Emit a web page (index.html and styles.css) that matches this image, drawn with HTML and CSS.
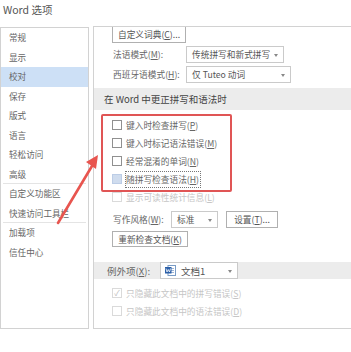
FILE: index.html
```html
<!DOCTYPE html>
<html lang="zh-CN">
<head>
<meta charset="utf-8">
<link rel="stylesheet" href="styles.css">
</head>
<body>
<div class="title">Word 选项</div>
<div class="main">
  <div class="nav">
    <div class="nav-item">常规</div>
    <div class="nav-item">显示</div>
    <div class="nav-item sel">校对</div>
    <div class="nav-item">保存</div>
    <div class="nav-item">版式</div>
    <div class="nav-item">语言</div>
    <div class="nav-item">轻松访问</div>
    <div class="nav-item">高级</div>
    <div class="nav-sep"></div>
    <div class="nav-item">自定义功能区</div>
    <div class="nav-item">快速访问工具栏</div>
    <div class="nav-sep"></div>
    <div class="nav-item">加载项</div>
    <div class="nav-item">信任中心</div>
  </div>
  <div class="content">
    <div class="btn cut">自定义词典(<u>C</u>)...</div>
    <div class="row r1">
      <span class="lbl">法语模式(<u>M</u>):</span>
      <span class="select w98">传统拼写和新式拼写<i class="arr"></i></span>
    </div>
    <div class="row r2">
      <span class="lbl">西班牙语模式(<u>H</u>):</span>
      <span class="select w105">仅 Tuteo 动词<i class="arr"></i></span>
    </div>
    <div class="band">在 Word 中更正拼写和语法时</div>
    <div class="checks">
      <div class="chk"><span class="box"></span><span>键入时检查拼写(<u>P</u>)</span></div>
      <div class="chk"><span class="box"></span><span>键入时标记语法错误(<u>M</u>)</span></div>
      <div class="chk"><span class="box"></span><span>经常混淆的单词(<u>N</u>)</span></div>
      <div class="chk"><span class="box blue"></span><span class="focus">随拼写检查语法(<u>H</u>)</span></div>
      <div class="chk dis"><span class="box"></span><span>显示可读性统计信息(<u>L</u>)</span></div>
    </div>
    <div class="row r3">
      <span class="lbl short">写作风格(<u>W</u>):</span>
      <span class="select w47">标准<i class="arr"></i></span>
      <span class="btn set">设置(<u>T</u>)...</span>
    </div>
    <div class="btn recheck">重新检查文档(<u>K</u>)</div>
    <div class="band ex">
      <span class="lbl ex-lbl">例外项(<u>X</u>):</span>
      <span class="select w78 doc"><svg class="docico" viewBox="0 0 11 11" width="11" height="11"><rect x="3" y="0.5" width="7.5" height="10" fill="#fff" stroke="#7a9cc6" stroke-width="1"/><rect x="5" y="3" width="4" height="1" fill="#9fb6d6"/><rect x="5" y="5" width="4" height="1" fill="#9fb6d6"/><rect x="5" y="7" width="4" height="1" fill="#9fb6d6"/><rect x="0" y="2" width="6.5" height="6.5" fill="#2b5fa8"/><path d="M1 3.5 L2 7 L3.25 4.5 L4.5 7 L5.5 3.5" fill="none" stroke="#fff" stroke-width="0.8"/></svg>文档1<i class="arr"></i></span>
    </div>
    <div class="checks ex-checks">
      <div class="chk dis"><span class="box tick">✓</span><span>只隐藏此文档中的拼写错误(<u>S</u>)</span></div>
      <div class="chk dis"><span class="box"></span><span>只隐藏此文档中的语法错误(<u>D</u>)</span></div>
    </div>
  </div>
</div>
<div class="redbox"></div>
<svg class="arrow" width="351" height="352" viewBox="0 0 351 352">
  <line x1="58" y1="223" x2="92" y2="166" stroke="#e8554f" stroke-width="2.6" stroke-linecap="round"/>
  <polygon points="98,155 86,162 96,169" fill="#e8554f"/>
</svg>
</body>
</html>
```
FILE: styles.css
```css
* { box-sizing: border-box; }
html, body { margin: 0; padding: 0; background: #fff; }
body {
  width: 351px; height: 352px; overflow: hidden; position: relative;
  font-family: "Noto Sans CJK SC", "Noto Sans", sans-serif;
  font-size: 8.7px; color: #555;
}
u { text-decoration: underline; text-underline-offset: 1px; }
.title { height: 26px; line-height: 20px; padding-left: 3px; font-size: 10.5px; color: #555; }
.main { display: flex; gap: 4px; height: 303px; }
.nav { width: 89px; border: 1px solid #d2d2d2; padding-top: 0; flex: none; margin-top: 1px; height: 302px; }
.nav-item { height: 19.5px; line-height: 19.5px; padding-left: 8px; color: #666; white-space: nowrap; font-size: 8.6px; }
.nav-item.sel { background: #cde0f6; }
.nav-sep { height: 1px; background: #e4e4e4; margin: -1px 2px 0 2px; }
.content { flex: 1; border: 1px solid #d2d2d2; border-right: none; overflow: hidden; }
.btn { display: inline-flex; align-items: center; justify-content: center; border: 1px solid #b0b0b0; background: #fff; color: #555; height: 16px; white-space: nowrap; }
.btn.cut { border-top: none; margin-left: 18px; width: 74px; display: flex; }
.row { display: flex; align-items: center; height: 17px; margin-left: 19px; }
.r1 { margin-top: 3px; }
.r2 { margin-top: 3px; }
.lbl { width: 73px; color: #666; white-space: nowrap; flex: none; }
.lbl.short { width: 58px; }
.select { position: relative; display: inline-flex; align-items: center; height: 17px; border: 1px solid #cacaca; background: #fff; padding-left: 5px; color: #555; white-space: nowrap; flex: none; }
.w98 { width: 98px; }
.w105 { width: 105px; }
.w47 { width: 47px; }
.w78 { width: 78px; }
.arr { position: absolute; right: 5px; top: 7px; width: 0; height: 0; border-left: 2.5px solid transparent; border-right: 2.5px solid transparent; border-top: 3px solid #888; }
.band { background: #ececec; height: 22px; line-height: 22px; margin-top: 5px; padding-left: 10px; font-size: 9.5px; color: #444; }
.checks { margin-top: 6px; margin-left: 18px; }
.chk { display: flex; align-items: center; height: 18px; color: #666; white-space: nowrap; }
.box { width: 10px; height: 10px; border: 1px solid #909090; background: #fff; margin-right: 4px; flex: none; display: inline-flex; align-items: center; justify-content: center; font-size: 8px; line-height: 1; }
.box.blue { background: #cfdcee; border-color: #bccde6; }
.focus { outline: 1px dotted #777; outline-offset: 0px; padding: 0 1px 0 0; line-height: 15px; }
.chk.dis { color: #c6c6c6; }
.chk.dis .box { border-color: #dadada; color: #bbb; }
.r3 { margin-top: 5px; }
.set { margin-left: 8px; width: 52px; height: 17px; }
.recheck { margin-top: 3px; margin-left: 18px; width: 76px; display: flex; }
.band.ex { display: flex; align-items: center; height: 17px; margin-top: 15px; padding-left: 13px; }
.ex-lbl { width: 53px; color: #666; }
.doc { padding-left: 4px; }
.docico { margin-right: 5px; }
.ex-checks { margin-top: 5px; }
.redbox { position: absolute; left: 101px; top: 114px; width: 131px; height: 78px; border: 2.5px solid #e05555; border-radius: 2px; }
.arrow { position: absolute; left: 0; top: 0; pointer-events: none; }
```
